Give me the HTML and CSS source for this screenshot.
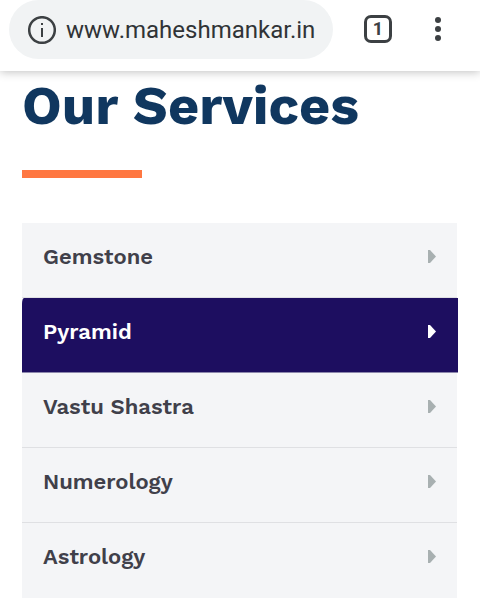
FILE: index.html
```html
<!DOCTYPE html>
<html lang="en">
<head>
    <meta charset="UTF-8">
    <meta name="viewport" content="width=device-width, initial-scale=1.0">
    <title>Our Services</title>
    <link rel="stylesheet" href="styles.css">
</head>
<body>
    <header class="toolbar">
        <div class="address">
            <button class="icon-btn" aria-label="Site information">
                <svg width="28" height="28" viewBox="0 0 28 28">
                    <circle cx="14" cy="14" r="12.8" fill="none" stroke="#3c4043" stroke-width="2.5"/>
                    <path d="M13 7h2v2h-2zM13 12h2v9h-2z" fill="#3c4043"/>
                </svg>
            </button>
            <input class="url" type="text" aria-label="Address" value="www.maheshmankar.in">
        </div>
        <button class="tabs" aria-label="Open tabs">1</button>
        <button class="icon-btn menu" aria-label="Menu">
            <svg width="6" height="26" viewBox="0 0 6 26">
                <g fill="#3c4043">
                    <circle cx="3" cy="4" r="3"/>
                    <circle cx="3" cy="13" r="3"/>
                    <circle cx="3" cy="22" r="3"/>
                </g>
            </svg>
        </button>
    </header>

    <main class="content">
        <h1 class="title">Our Services</h1>
        <ul class="services">
            <li><a href="#gemstone">Gemstone <svg class="arrow" viewBox="0 0 8 13"><path d="M0 0h2l6 6.5-6 6.5H0z"/></svg></a></li>
            <li class="active"><a href="#pyramid">Pyramid <svg class="arrow" viewBox="0 0 8 13"><path d="M0 0h2l6 6.5-6 6.5H0z"/></svg></a></li>
            <li><a href="#vastu">Vastu Shastra <svg class="arrow" viewBox="0 0 8 13"><path d="M0 0h2l6 6.5-6 6.5H0z"/></svg></a></li>
            <li><a href="#numerology">Numerology <svg class="arrow" viewBox="0 0 8 13"><path d="M0 0h2l6 6.5-6 6.5H0z"/></svg></a></li>
            <li><a href="#astrology">Astrology <svg class="arrow" viewBox="0 0 8 13"><path d="M0 0h2l6 6.5-6 6.5H0z"/></svg></a></li>
        </ul>
    </main>
</body>
</html>
```
FILE: styles.css
```css
* {
    box-sizing: border-box;
}
body {
    margin: 0;
    background-color: #fff;
    font-family: "Work Sans", Inter, sans-serif;
}
button {
    padding: 0;
    border: none;
    background: none;
    cursor: pointer;
}

.toolbar {
    display: flex;
    align-items: flex-start;
    padding: 0 39px 12px 9px;
    background-color: #fff;
    box-shadow: 0 1px 9px rgba(0, 0, 0, 0.25);
}
.address {
    display: flex;
    flex: 1;
    align-items: center;
    min-width: 0;
    height: 59px;
    padding: 0 16px 0 19px;
    border-radius: 30px;
    background-color: #f1f3f4;
}
.icon-btn {
    display: flex;
}
.url {
    flex: 1;
    min-width: 0;
    margin-left: 10px;
    padding: 0;
    border: none;
    outline: none;
    background: none;
    color: #303336;
    font-family: Roboto, sans-serif;
    font-size: 24px;
}
.tabs {
    width: 28px;
    height: 28px;
    margin: 15px 43px 0 31px;
    border: 3px solid #3c4043;
    border-radius: 7px;
    color: #3c4043;
    font-family: Roboto, sans-serif;
    font-size: 18px;
    font-weight: bold;
    line-height: 22px;
}
.menu {
    margin-top: 16px;
}

.content {
    padding: 0 23px 10px 22px;
}
.title {
    margin: 0 0 45px;
    color: #10375f;
    font-size: 54px;
    font-weight: 700;
    line-height: 70px;
}
.title::after {
    content: "";
    display: block;
    width: 120px;
    height: 8px;
    margin-top: 29px;
    background-color: #ff7741;
}

.services {
    margin: 0;
    padding: 0;
    list-style: none;
    background-color: #f4f5f7;
}
.services li {
    border-bottom: 1px solid #dfe0e3;
}
.services li:last-child {
    border-color: transparent;
}
.services a {
    display: flex;
    align-items: center;
    justify-content: space-between;
    padding: 19px 21px 25px;
    color: #40404a;
    font-size: 22px;
    font-weight: 600;
    line-height: 30px;
    text-decoration: none;
}
.services .active {
    margin-right: -1px;
    border-color: #8c87ac;
    border-top-left-radius: 2px 6px;
    background-color: #1d0e60;
}
.active a {
    padding-right: 22px;
    color: #fff;
}
.arrow {
    width: 8px;
    height: 13px;
    margin-bottom: 2px;
    fill: #a8b0b1;
}
.active .arrow {
    fill: #fff;
}
```
